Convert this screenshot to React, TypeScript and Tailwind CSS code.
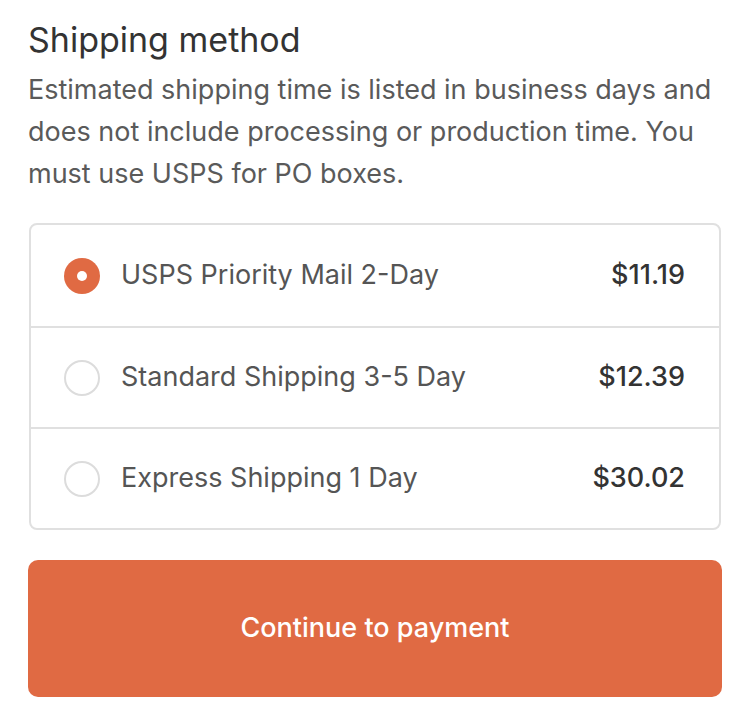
import { useState } from 'react';

const options = [
  { id: 'usps', label: 'USPS Priority Mail 2-Day', price: '$11.19' },
  { id: 'standard', label: 'Standard Shipping 3-5 Day', price: '$12.39' },
  { id: 'express', label: 'Express Shipping 1 Day', price: '$30.02' },
];

export default function App() {
  const [selected, setSelected] = useState('usps');

  return (
    <div className="w-[750px] h-[721px] bg-white px-[28px] pt-[18px] font-['Inter',sans-serif]">
      <h2 className="text-[34px] leading-[44px] text-[#333333]">Shipping method</h2>
      <p className="mt-[7px] text-[27px] leading-[42px] text-[#5a5a5a]">
        Estimated shipping time is listed in business days and does not include processing or
        production time. You must use USPS for PO boxes.
      </p>

      <div className="mt-[28px] ml-px w-[692px] rounded-[8px] border-2 border-[#e0e0e0]">
        {options.map((opt, i) => (
          <label
            key={opt.id}
            className={`flex h-[101px] cursor-pointer items-center pl-[33px] pr-[34px] ${
              i > 0 ? 'border-t-2 border-[#e0e0e0]' : ''
            }`}
            onClick={() => setSelected(opt.id)}
          >
            {selected === opt.id ? (
              <span className="flex h-[36px] w-[36px] items-center justify-center rounded-full bg-[#e06a43]">
                <span className="h-[10px] w-[10px] rounded-full bg-white" />
              </span>
            ) : (
              <span className="h-[36px] w-[36px] rounded-full border-2 border-[#dcdcdc] bg-white" />
            )}
            <span className="ml-[21px] flex-1 text-[27px] text-[#555555]">{opt.label}</span>
            <span className="text-[27px] font-medium text-[#333333]">{opt.price}</span>
          </label>
        ))}
      </div>

      <button className="mt-[30px] flex h-[137px] w-[694px] items-center justify-center rounded-[10px] bg-[#e06a43] text-[27px] font-medium text-white">
        Continue to payment
      </button>
    </div>
  );
}
